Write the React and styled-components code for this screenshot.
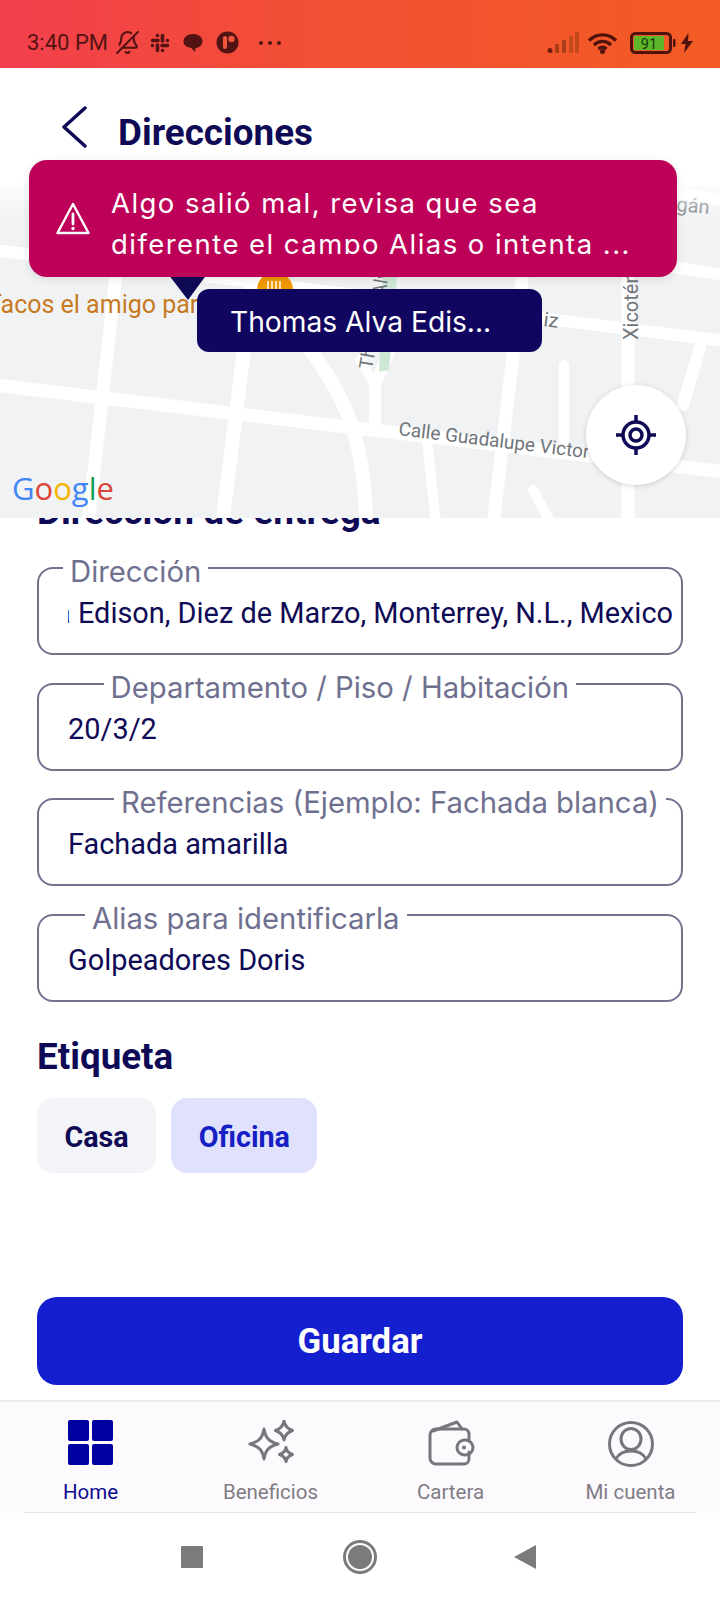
import React from "react";
import styled, { createGlobalStyle } from "styled-components";
import { BellOff } from "lucide-react";

const navy = "#0f0a55";

const GlobalStyle = createGlobalStyle`
  html, body {
    margin: 0;
    padding: 0;
    background: #fff;
    font-family: "Roboto", "Liberation Sans", sans-serif;
  }
`;

const Page = styled.div`
  position: relative;
  width: 720px;
  height: 1600px;
  overflow: hidden;
  display: flex;
  flex-direction: column;
  background: #fff;
`;

const StatusBar = styled.div`
  height: 68px;
  flex: none;
  box-sizing: border-box;
  padding: 30px 27px 0;
  display: flex;
  justify-content: space-between;
  align-items: flex-start;
  background: linear-gradient(90deg, #f23f4e 0%, #f24e35 40%, #f35c24 100%);
  color: #541313;
`;

const StatusGroup = styled.div`
  display: flex;
  align-items: center;
  height: 25px;
`;

const Time = styled.span`
  font-size: 22px;
  line-height: 25px;
  margin-right: 7px;
  white-space: nowrap;
`;

const Bell = styled(BellOff)`
  width: 25px;
  height: 25px;
  transform: scaleX(-1);
  margin-right: 10px;
`;

const Header = styled.header`
  height: 117px;
  flex: none;
  box-sizing: border-box;
  padding: 38px 0 0 62px;
  display: flex;
  align-items: flex-start;
  gap: 30px;
`;

const Title = styled.h1`
  margin: 4px 0 0;
  font-size: 36.8px;
  line-height: 46px;
  font-weight: 700;
  color: ${navy};
`;

const MapArea = styled.div`
  position: relative;
  z-index: 1;
  flex: none;
  height: 333px;
  background: #f1f2f4;
  overflow: hidden;
`;

const MapDrawing = styled.svg`
  display: block;
  width: 720px;
  height: 333px;
`;

const PlacePill = styled.div`
  position: absolute;
  left: 197px;
  top: 104px;
  width: 345px;
  height: 63px;
  box-sizing: border-box;
  padding: 3px 0 0 33px;
  border-radius: 12px;
  background: #10065f;
  color: #fff;
  font-family: "Inter", sans-serif;
  font-size: 28.2px;
  line-height: 60px;
`;

const LocateButton = styled.div`
  position: absolute;
  left: 586px;
  top: 200px;
  width: 100px;
  height: 100px;
  border-radius: 50%;
  background: #fff;
  box-shadow: 0 1px 5px rgba(0, 0, 0, 0.16);
  display: flex;
  align-items: center;
  justify-content: center;
`;

const GoogleMark = styled.div`
  position: absolute;
  left: 12px;
  top: 283px;
  font-family: "Open Sans", sans-serif;
  font-size: 31px;
  line-height: 40px;
  font-weight: 500;
`;

const GoogleLetter = styled.span`
  color: ${(p) => p.$color};
`;

const Toast = styled.div`
  position: absolute;
  z-index: 3;
  left: 29px;
  top: 160px;
  width: 648px;
  height: 117px;
  box-sizing: border-box;
  padding: 23px 0 0 27px;
  display: flex;
  gap: 21px;
  border-radius: 18px;
  background: #bd0058;
  box-shadow: 0 2px 8px rgba(0, 0, 0, 0.1);
  color: #fff;
`;

const ToastIcon = styled.svg`
  flex: none;
  width: 34px;
  height: 34px;
  margin-top: 19px;
`;

const ToastText = styled.div`
  height: 71px;
  overflow: hidden;
  font-family: "Inter", sans-serif;
  font-size: 27.5px;
  line-height: 41px;
  letter-spacing: 1.45px;
  white-space: nowrap;
`;

const Form = styled.main`
  flex: 1;
  padding: 0 37px;
`;

const HiddenHeading = styled.h2`
  margin: -21.5px 0 0;
  height: 29px;
  font-size: 37px;
  line-height: 29px;
  font-weight: 700;
  color: ${navy};
  white-space: nowrap;
`;

const FieldList = styled.div`
  display: flex;
  flex-direction: column;
  gap: 10.5px;
  margin-top: 24.5px;
`;

const Field = styled.fieldset`
  margin: 0;
  height: 105px;
  box-sizing: border-box;
  padding: 0 8px 0 29px;
  min-inline-size: 0;
  border: 2px solid #72728e;
  border-radius: 16px;
`;

const FieldLabel = styled.legend`
  margin-left: ${(p) => p.$left}px;
  padding: 8px 7px 0;
  font-family: "Inter", sans-serif;
  font-size: 29.3px;
  line-height: 28px;
  color: #6f7090;
  white-space: nowrap;
`;

const FieldValue = styled.div`
  display: flex;
  justify-content: ${(p) => (p.$end ? "flex-end" : "flex-start")};
  overflow: hidden;
  margin-top: 10px;
  font-size: 28.9px;
  line-height: 34px;
  color: ${navy};
  white-space: nowrap;
`;

const SectionTitle = styled.h2`
  margin: 33px 0 0;
  font-size: 36.8px;
  line-height: 44px;
  font-weight: 700;
  color: ${navy};
`;

const Chips = styled.div`
  display: flex;
  gap: 15px;
  margin-top: 19px;
`;

const Chip = styled.div`
  height: 75px;
  box-sizing: border-box;
  padding: 3px 27.5px 0;
  border-radius: 16px;
  display: flex;
  align-items: center;
  font-size: 28.7px;
  font-weight: 700;
  background: ${(p) => (p.$active ? "#e0e2fd" : "#f3f4f7")};
  color: ${(p) => (p.$active ? "#1520c4" : navy)};
`;

const SaveWrap = styled.div`
  flex: none;
  padding: 0 37px 15px;
`;

const SaveButton = styled.button`
  display: block;
  width: 100%;
  height: 88px;
  border: 0;
  border-radius: 20px;
  background: #1420cf;
  color: #fff;
  font-family: "Roboto", sans-serif;
  font-size: 34.7px;
  font-weight: 700;
`;

const BottomNav = styled.nav`
  flex: none;
  height: 113px;
  box-sizing: border-box;
  border-top: 2px solid #eeeeef;
  background: #fdfafd;
  display: grid;
  grid-template-columns: repeat(4, 1fr);
  position: relative;
  &::after {
    content: "";
    position: absolute;
    left: 24px;
    right: 24px;
    bottom: 0;
    height: 1px;
    background: #e6e6e9;
  }
`;

const NavItem = styled.div`
  display: flex;
  flex-direction: column;
  align-items: center;
  padding: 18px 0 0 1px;
  font-size: 20.5px;
  line-height: 26px;
  color: ${(p) => (p.$active ? "#0c0a8f" : "#7f7c85")};
`;

const NavIcon = styled.svg`
  display: block;
  width: 48px;
  height: 48px;
  margin-bottom: 11px;
`;

const HomeGrid = styled.div`
  width: 45px;
  height: 45px;
  margin-bottom: 14px;
  display: grid;
  grid-template-columns: 1fr 1fr;
  gap: 3px;
`;

const HomeCell = styled.div`
  border-radius: 2px;
  background: #0000a0;
`;

const SystemNav = styled.div`
  flex: none;
  height: 87px;
  background: #fff;
  display: grid;
  grid-template-columns: 181px 22px 140px 34px 137px 22px;
  align-items: center;
`;

const SysSquare = styled.div`
  grid-column: 2;
  width: 22px;
  height: 22px;
  border-radius: 1px;
  background: #7b7b7b;
`;

const SysCircle = styled.div`
  grid-column: 4;
  width: 34px;
  height: 34px;
  box-sizing: border-box;
  border-radius: 50%;
  border: 3px solid #7b7b7b;
  padding: 2px;
  &::before {
    content: "";
    display: block;
    width: 100%;
    height: 100%;
    border-radius: 50%;
    background: #7b7b7b;
  }
`;

const SysBack = styled.div`
  grid-column: 6;
  width: 0;
  height: 0;
  border-style: solid;
  border-width: 12px 22px 12px 0;
  border-color: transparent #7b7b7b transparent transparent;
`;

const streets = [
  { d: "M-5 65 L725 156", w: 12 },
  { d: "M-5 200 L725 287", w: 13 },
  { d: "M640 77 L725 90", w: 12 },
  { d: "M660 5 L725 16", w: 12 },
  { d: "M126 0 L88 340", w: 13 },
  { d: "M252 100 L222 340", w: 14 },
  { d: "M298 150 C 340 200 366 250 366 340", w: 14 },
  { d: "M375 198 L375 245", w: 12 },
  { d: "M522 95 L493 340", w: 13 },
  { d: "M564 180 L564 262", w: 10 },
  { d: "M628 95 L628 340", w: 13 },
  { d: "M700 162 L683 220", w: 12 },
  { d: "M427 255 L436 340", w: 10 },
  { d: "M533 305 L552 340", w: 10 },
  { d: "M375 200 L360 175", w: 10 },
  { d: "M375 200 L392 160", w: 12 },
];

const MapStreets = () => (
  <g stroke="#fff" fill="none" strokeLinecap="round">
    {streets.map((s, i) => (
      <path key={i} d={s.d} strokeWidth={s.w} />
    ))}
  </g>
);

const StatusIcons = () => (
  <>
    <Bell strokeWidth={2} />
    <svg width="20" height="20" viewBox="0 0 20 20" style={{ marginRight: 13 }}>
      <g stroke="currentColor" strokeWidth="3.600" strokeLinecap="round" fill="currentColor">
        <path d="M2.500 7.500h5.500M12.500 2.500v5.500M17.500 12.500H12M7.500 17.500V12" />
        <path d="M7.500 2.500v.01M17.500 7.500v.01M12.500 17.500v.01M2.500 12.500v.01" />
      </g>
    </svg>
    <svg width="20" height="20" viewBox="0 0 20 20" style={{ marginRight: 13 }}>
      <path
        d="M10 1c5.500 0 9.500 3 9.500 7.200S15.500 15 12.500 15l-.5 4-4-4.300C3.500 14.500.5 12 .5 8.200S4.500 1 10 1z"
        fill="currentColor"
      />
    </svg>
    <svg width="23" height="23" viewBox="0 0 23 23" style={{ marginRight: 19 }}>
      <circle cx="11.500" cy="11.500" r="11" fill="currentColor" />
      <rect x="7" y="5" width="4" height="13" rx="2" fill="#f2563a" />
      <circle cx="15.500" cy="8" r="3.200" fill="#f2563a" />
    </svg>
    <svg width="24" height="6" viewBox="0 0 24 6">
      <g fill="currentColor">
        <circle cx="3" cy="3" r="2" />
        <circle cx="12" cy="3" r="2" />
        <circle cx="21" cy="3" r="2" />
      </g>
    </svg>
  </>
);

const SystemIcons = () => (
  <>
    <svg width="33" height="22" viewBox="0 0 33 22" style={{ marginRight: 7 }}>
      <circle cx="3" cy="18.500" r="2.500" fill="#6e1d0c" />
      <g fill="#a83d17">
        <rect x="8" y="12" width="4" height="9" rx="1" />
        <rect x="15" y="8" width="4" height="13" rx="1" />
      </g>
      <g fill="#c34a1b">
        <rect x="22" y="4" width="4" height="17" rx="1" />
        <rect x="28" y="0" width="4" height="21" rx="1" />
      </g>
    </svg>
    <svg width="31" height="22" viewBox="0 0 31 22" style={{ marginRight: 12 }}>
      <g fill="none" stroke="#4f120c" strokeWidth="3.400">
        <path d="M2 8.500C9.500 1 21.500 1 29 8.500" />
        <path d="M7 13c5-4.800 12-4.800 17 0" />
        <path d="M11.500 17c2.400-2 5.600-2 8 0" />
      </g>
      <circle cx="15.500" cy="19.500" r="2.500" fill="#4f120c" />
    </svg>
    <svg width="46" height="22" viewBox="0 0 46 22" style={{ marginRight: 5 }}>
      <rect x="1.500" y="1.500" width="39" height="19" rx="4" fill="none" stroke="#4f120c" strokeWidth="3" />
      <rect x="4" y="4" width="30" height="14" fill="#5cb82a" />
      <rect x="43" y="7" width="2.500" height="8" rx="1" fill="#4f120c" />
      <text x="19" y="17" textAnchor="middle" fontFamily="Roboto, sans-serif" fontSize="14.500" fill="#173a10">91</text>
    </svg>
    <svg width="12" height="20" viewBox="0 0 12 20">
      <path d="M7.500 0 0 11h4.500L3 20l9-12H7z" fill="#4f120c" />
    </svg>
  </>
);

const fields = [
  { label: "Dirección", left: -5, value: "Thomas Alva Edison, Diez de Marzo, Monterrey, N.L., Mexico", end: true },
  { label: "Departamento / Piso / Habitación", left: 35.5, value: "20/3/2" },
  { label: "Referencias (Ejemplo: Fachada blanca)", left: 46, value: "Fachada amarilla" },
  { label: "Alias para identificarla", left: 17, value: "Golpeadores Doris" },
];

const App = () => {
  return (
    <Page>
      <GlobalStyle />
      <StatusBar>
        <StatusGroup>
          <Time>3:40 PM</Time>
          <StatusIcons />
        </StatusGroup>
        <StatusGroup>
          <SystemIcons />
        </StatusGroup>
      </StatusBar>

      <Header>
        <svg width="26" height="42" viewBox="0 0 26 42">
          <path d="M23 2 2 21l21 19" fill="none" stroke={navy} strokeWidth="3.500" strokeLinecap="round" strokeLinejoin="round" />
        </svg>
        <Title>Direcciones</Title>
      </Header>

      <MapArea>
        <MapDrawing viewBox="0 0 720 333">
          <defs>
            <linearGradient id="mapFade" x1="0" y1="0" x2="0" y2="1">
              <stop offset="0" stopColor="#fff" stopOpacity="0.8" />
              <stop offset="1" stopColor="#fff" stopOpacity="0" />
            </linearGradient>
          </defs>
          <MapStreets />
          <path d="M383 90h14l-8 95-10 2z" fill="#cfe8d6" />
          <circle cx="275" cy="105" r="18" fill="#f29900" />
          <path d="M268 96v8M272 96v8M276 96v8M280 96v8" stroke="#fff" strokeWidth="1.500" />
          <path d="M165 85h45l-22 30z" fill={navy} />
          <text x="-13" y="128" fontFamily="Roboto, sans-serif" fontSize="25" fill="#c77a1f">Tacos el amigo par</text>
          <text
            fontFamily="Roboto, sans-serif"
            fontSize="19"
            fill="#70757a"
            transform="translate(398 250) rotate(7)"
          >
            Calle Guadalupe Victor
          </text>
          <text fontFamily="Roboto, sans-serif" fontSize="20" fill="#70757a" transform="translate(638 155) rotate(-90)">Xicotén</text>
          <text fontFamily="Roboto, sans-serif" fontSize="20" fill="#70757a" transform="translate(543 141) rotate(7)">iz</text>
          <text fontFamily="Roboto, sans-serif" fontSize="20" fill="#70757a" transform="translate(676 26) rotate(5)">gán</text>
          <text fontFamily="Roboto, sans-serif" fontSize="19" fill="#70757a" transform="translate(372 185) rotate(-80)">Thomas Alva</text>
          <rect width="720" height="40" fill="url(#mapFade)" />
        </MapDrawing>
        <PlacePill>Thomas Alva Edis...</PlacePill>
        <LocateButton>
          <svg width="42" height="42" viewBox="0 0 42 42">
            <g fill="none" stroke={navy} strokeWidth="3.500">
              <circle cx="21" cy="21" r="13" />
              <circle cx="21" cy="21" r="6" />
              <path d="M21 1v7M21 34v7M1 21h7M34 21h7" />
            </g>
          </svg>
        </LocateButton>
        <GoogleMark>
          <GoogleLetter $color="#4285f4">G</GoogleLetter>
          <GoogleLetter $color="#db4437">o</GoogleLetter>
          <GoogleLetter $color="#f4b400">o</GoogleLetter>
          <GoogleLetter $color="#4285f4">g</GoogleLetter>
          <GoogleLetter $color="#0f9d58">l</GoogleLetter>
          <GoogleLetter $color="#db4437">e</GoogleLetter>
        </GoogleMark>
      </MapArea>

      <Toast>
        <ToastIcon viewBox="0 0 34 34">
          <path d="M17 2 32.500 31h-31z" fill="none" stroke="#fff" strokeWidth="2.400" strokeLinejoin="round" />
          <path d="M17 12v10" stroke="#fff" strokeWidth="2.800" strokeLinecap="round" />
          <circle cx="17" cy="26.500" r="1.700" fill="#fff" />
        </ToastIcon>
        <ToastText>
          Algo salió mal, revisa que sea
          <br />
          diferente el campo Alias o intenta ...
        </ToastText>
      </Toast>

      <Form>
        <HiddenHeading>Dirección de entrega</HiddenHeading>
        <FieldList>
          {fields.map((f) => (
            <Field key={f.label}>
              <FieldLabel $left={f.left}>{f.label}</FieldLabel>
              <FieldValue $end={f.end}>{f.value}</FieldValue>
            </Field>
          ))}
        </FieldList>
        <SectionTitle>Etiqueta</SectionTitle>
        <Chips>
          <Chip>Casa</Chip>
          <Chip $active>Oficina</Chip>
        </Chips>
      </Form>

      <SaveWrap>
        <SaveButton>Guardar</SaveButton>
      </SaveWrap>

      <BottomNav>
        <NavItem $active>
          <HomeGrid>
            <HomeCell />
            <HomeCell />
            <HomeCell />
            <HomeCell />
          </HomeGrid>
          Home
        </NavItem>
        <NavItem>
          <NavIcon viewBox="0 0 48 48">
            <g fill="none" stroke="#77757d" strokeWidth="3" strokeLinejoin="round">
              <path d="M17 9c1.500 9 5 12.500 14 15-9 2.500-12.500 6-14 15-1.500-9-5-12.500-14-15 9-2.500 12.500-6 14-15z" />
              <path d="M37 1c.8 5 3 7.500 8.500 9.500C40 12.500 37.800 15 37 20c-.8-5-3-7.500-8.500-9.500C34 8.500 36.200 6 37 1z" />
              <path d="M39 27.500c.6 3.800 2.400 5.600 6.500 7-4.100 1.400-5.900 3.200-6.500 7-.6-3.800-2.400-5.600-6.500-7 4.100-1.400 5.900-3.200 6.500-7z" />
            </g>
          </NavIcon>
          Beneficios
        </NavItem>
        <NavItem>
          <NavIcon viewBox="0 0 48 48">
            <g fill="none" stroke="#77757d" strokeWidth="3" strokeLinejoin="round" strokeLinecap="round">
              <path d="M42 21v-7a5 5 0 0 0-5-5H9a6 6 0 0 0-6 6v23a6 6 0 0 0 6 6h28a5 5 0 0 0 5-5v-7" />
              <path d="M6 11 30 2l5 7" />
              <rect x="30" y="20" width="16" height="15" rx="7.500" />
            </g>
            <circle cx="37" cy="27.500" r="2" fill="#77757d" />
          </NavIcon>
          Cartera
        </NavItem>
        <NavItem>
          <NavIcon viewBox="0 0 48 48">
            <g fill="none" stroke="#77757d" strokeWidth="3">
              <circle cx="24" cy="24" r="21.500" />
              <ellipse cx="24" cy="19" rx="10" ry="10.500" />
              <path d="M9 39c3-6 9-8 15-8s12 2 15 8" />
            </g>
          </NavIcon>
          Mi cuenta
        </NavItem>
      </BottomNav>

      <SystemNav>
        <SysSquare />
        <SysCircle />
        <SysBack />
      </SystemNav>
    </Page>
  );
};

export default App;
